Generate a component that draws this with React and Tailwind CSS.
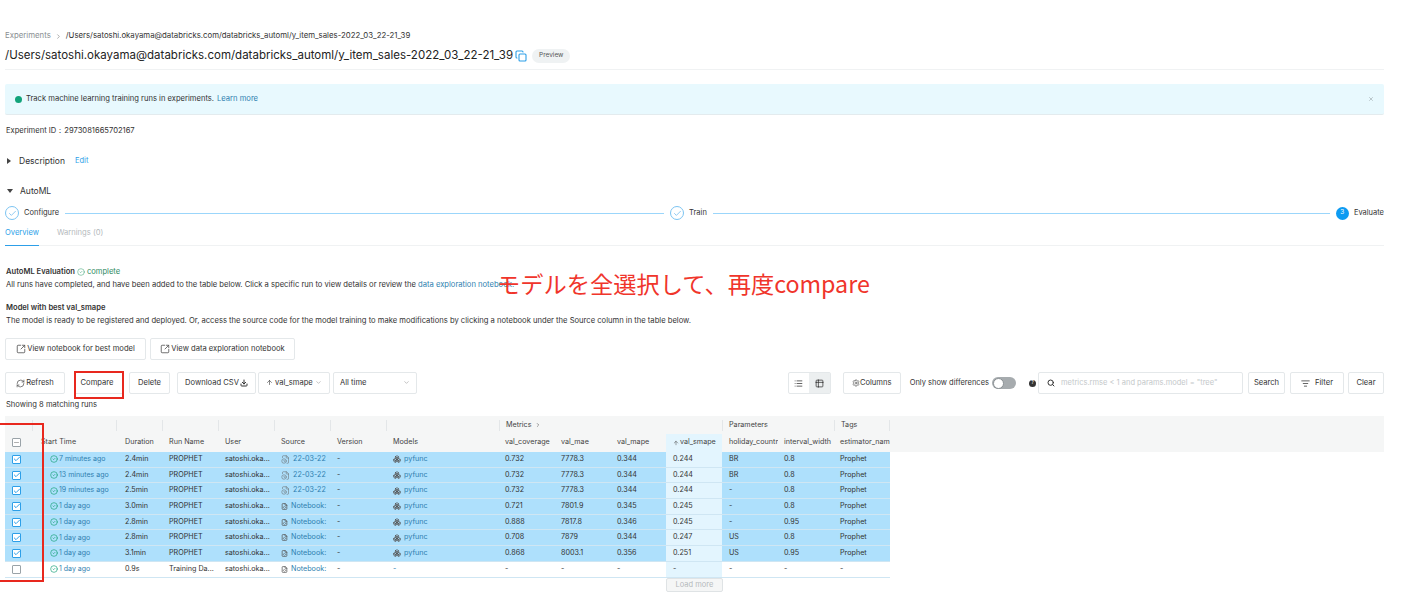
import { ArrowUp, Check, ChevronDown, ChevronRight, Download, FileClock, List, Minus, RefreshCw, Search, Settings, SquareArrowOutUpRight, Table2, ListFilter, X, Copy, Boxes, FileCode, CircleCheck } from "lucide-react";

const COLS = "grid grid-cols-[28px_84px_46px_56px_56px_56px_56px_112px_56px_56px_55px_56px_56px_56px_56px]";

const runs = [
  ["7 minutes ago", "2.4min", "PROPHET", "22-03-22", "pyfunc", "0.732", "7778.3", "0.344", "0.244", "BR", "0.8", "Prophet"],
  ["13 minutes ago", "2.4min", "PROPHET", "22-03-22", "pyfunc", "0.732", "7778.3", "0.344", "0.244", "BR", "0.8", "Prophet"],
  ["19 minutes ago", "2.5min", "PROPHET", "22-03-22", "pyfunc", "0.732", "7778.3", "0.344", "0.244", "-", "0.8", "Prophet"],
  ["1 day ago", "3.0min", "PROPHET", "Notebook:", "pyfunc", "0.721", "7801.9", "0.345", "0.245", "-", "0.8", "Prophet"],
  ["1 day ago", "2.8min", "PROPHET", "Notebook:", "pyfunc", "0.888", "7817.8", "0.346", "0.245", "-", "0.95", "Prophet"],
  ["1 day ago", "2.8min", "PROPHET", "Notebook:", "pyfunc", "0.708", "7879", "0.344", "0.247", "US", "0.8", "Prophet"],
  ["1 day ago", "3.1min", "PROPHET", "Notebook:", "pyfunc", "0.868", "8003.1", "0.356", "0.251", "US", "0.95", "Prophet"],
  ["1 day ago", "0.9s", "Training Da...", "Notebook:", "-", "-", "-", "-", "-", "-", "-", "-"],
];

function Btn({ children, className = "" }) {
  return (
    <div className={`flex h-[22px] items-center justify-center whitespace-nowrap rounded-[2px] border border-[#e4e8ea] bg-white text-[7.6px] text-[#333] ${className}`}>
      {children}
    </div>
  );
}

function StepDone({ label }) {
  return (
    <div className="flex items-center gap-[5px]">
      <div className="flex size-[14px] items-center justify-center rounded-full border border-[#7cc4f2]">
        <Check className="size-[9px] text-[#3aa0e6]" strokeWidth={1.5} />
      </div>
      <span>{label}</span>
    </div>
  );
}

function Row({ run, index }) {
  const selected = index < 7;
  const isDate = run[3] !== "Notebook:";
  const cell = "flex items-center pl-[6px] whitespace-nowrap overflow-hidden";
  return (
    <div className={`${COLS} h-[15.7px] border-b border-[#cfe6f3] text-[7.2px] text-[#333] ${selected ? "bg-[#aee0fc]" : "bg-white"}`}>
      <div className="flex items-center pl-[7px]">
        {selected ? (
          <div className="flex size-[9px] items-center justify-center rounded-[1px] border border-[#2d9fe8] bg-white">
            <Check className="size-[8px] shrink-0 text-[#2d9fe8]" strokeWidth={3} />
          </div>
        ) : (
          <div className="size-[9px] rounded-[1px] border border-[#9aa3a8] bg-white" />
        )}
      </div>
      <div className="flex items-center gap-[1px] pl-[17px] whitespace-nowrap text-[7px] text-[#2f7fb0]">
        <CircleCheck className="size-[8px] shrink-0 text-[#19a17a]" strokeWidth={2} />
        {run[0]}
      </div>
      <div className={`${cell} pl-[8px]`}>{run[1]}</div>
      <div className={cell}>{run[2]}</div>
      <div className={cell}>satoshi.oka...</div>
      <div className={`${cell} gap-[3px] text-[#2f7fb0]`}>
        {isDate ? <FileClock className="size-[9px] shrink-0 text-[#666]" strokeWidth={1.4} /> : <FileCode className="size-[7px] shrink-0 text-[#555]" strokeWidth={2.5} />}
        {run[3]}
      </div>
      <div className={cell}>-</div>
      <div className={`${cell} gap-[3px] text-[#2f7fb0]`}>
        {run[4] !== "-" && <Boxes className="size-[8px] shrink-0 text-[#555]" strokeWidth={2.2} />}
        {run[4]}
      </div>
      <div className={cell}>{run[5]}</div>
      <div className={cell}>{run[6]}</div>
      <div className={cell}>{run[7]}</div>
      <div className="flex items-center overflow-hidden whitespace-nowrap bg-[#e3f5fe] pl-[7px]">{run[8]}</div>
      <div className="flex items-center overflow-hidden whitespace-nowrap pl-[7px]">{run[9]}</div>
      <div className={cell}>{run[10]}</div>
      <div className={cell}>{run[11]}</div>
    </div>
  );
}

export default function App() {
  return (
    <div className="relative h-[593px] w-[1406px] overflow-hidden bg-white font-['Inter',sans-serif] text-[#333]">
      <div className="w-[1384px] pl-[5px]">
        {/* Header */}
        <div className="mt-[29px] flex h-[14px] items-center gap-[4px] text-[7.8px]">
          <span className="text-[#8a8f93]">Experiments</span>
          <ChevronRight className="size-[7px] text-[#777]" />
          <span>/Users/satoshi.okayama@databricks.com/databricks_automl/y_item_sales-2022_03_22-21_39</span>
        </div>
        <div className="mt-[4px] flex h-[18px] items-center text-[11.5px] text-[#222]">
          <span>/Users/satoshi.okayama@databricks.com/databricks_automl/y_item_sales-2022_03_22-21_39</span>
          <Copy className="ml-[2px] size-[12px] text-[#2d9fe8]" strokeWidth={2.2} />
          <span className="ml-[5px] rounded-full bg-[#eff2f3] px-[7px] py-[2px] text-[6.5px] text-[#555]">Preview</span>
        </div>
        <div className="mt-[4px] h-px bg-[#f0f2f3]" />

        {/* Banner */}
        <div className="mt-[14px] flex h-[31px] items-center rounded-[2px] border-b border-[#e3ebee] bg-[#e8f9fe] pl-[10px] pr-[10px] text-[7.6px]">
          <div className="size-[7px] rounded-full bg-[#12a37a]" />
          <span className="ml-[4px]">Track machine learning training runs in experiments.</span>
          <span className="ml-[3px] text-[#2f7fb0]">Learn more</span>
          <X className="ml-auto size-[6px] text-[#8a9499]" />
        </div>
        <div className="mt-[10px] flex h-[12px] items-center pl-[1px] text-[7.6px]">Experiment ID：2973081665702167</div>

        <div className="mt-[17px] flex h-[14px] items-center text-[8.5px]">
          <div className="ml-[2px] size-0 border-y-[3px] border-l-[4px] border-y-transparent border-l-[#444]" />
          <span className="ml-[8px]">Description</span>
          <span className="ml-[10px] text-[7.5px] text-[#2d9fe8]">Edit</span>
        </div>
        <div className="mt-[16px] flex h-[14px] items-center text-[8.5px]">
          <div className="ml-[1.5px] size-0 border-x-[3px] border-t-[4px] border-x-transparent border-t-[#444]" />
          <span className="ml-[7.5px]">AutoML</span>
        </div>

        {/* Steps */}
        <div className="mt-[8px] flex h-[14px] items-center text-[7.5px]">
          <StepDone label="Configure" />
          <div className="mx-[6px] h-px w-[599px] bg-[#9bd6fb]" />
          <StepDone label="Train" />
          <div className="mx-[6px] h-px flex-1 bg-[#9bd6fb]" />
          <div className="flex items-center gap-[5px]">
            <div className="flex size-[13px] items-center justify-center rounded-full bg-[#0d9bf2] text-[6.5px] text-white">3</div>
            <span>Evaluate</span>
          </div>
        </div>
        <div className="mt-[6px] flex h-[20px] gap-[18px] border-b border-[#f0f2f3] text-[7.6px]">
          <span className="-mb-px border-b border-[#2d9fe8] pt-[1px] text-[#2d9fe8]">Overview</span>
          <span className="pt-[1px] text-[#b5babd]">Warnings (0)</span>
        </div>

        {/* Evaluation */}
        <div className="mt-[20px] flex h-[12px] items-center gap-[2px] pl-[1px] text-[7.6px]">
          <span className="font-semibold">AutoML Evaluation</span>
          <CircleCheck className="size-[8px] text-[#2e9e6c]" strokeWidth={1.5} />
          <span className="text-[#2e8a5f]">complete</span>
        </div>
        <div className="mt-[1px] h-[12px] pl-[1px] text-[7.62px] leading-[12px]">
          All runs have completed, and have been added to the table below. Click a specific run to view details or review the{" "}
          <span className="text-[#2f7fb0]">data exploration notebook.</span>
        </div>
        <div className="mt-[11px] h-[12px] pl-[1px] text-[7.6px] font-semibold leading-[12px]">Model with best val_smape</div>
        <div className="mt-[1px] h-[12px] pl-[1px] text-[7.62px] leading-[12px]">
          The model is ready to be registered and deployed. Or, access the source code for the model training to make modifications by clicking a notebook under the Source column in the table below.
        </div>

        <div className="mt-[11px] flex gap-[4px]">
          <Btn className="w-[141px] gap-[1px]"><SquareArrowOutUpRight className="size-[10px] text-[#555]" />View notebook for best model</Btn>
          <Btn className="w-[145px] gap-[1px]"><SquareArrowOutUpRight className="size-[10px] text-[#555]" />View data exploration notebook</Btn>
        </div>

        {/* Toolbar */}
        <div className="mt-[12px] flex items-center">
          <Btn className="w-[60px] gap-[1px]"><RefreshCw className="size-[9px] text-[#555]" />Refresh</Btn>
          <Btn className="ml-[9px] w-[50px] pr-[4px]">Compare</Btn>
          <Btn className="ml-[5px] w-[41px]">Delete</Btn>
          <Btn className="ml-[7px] w-[79px] gap-[1px]">Download CSV<Download className="size-[8px]" strokeWidth={3} /></Btn>
          <Btn className="ml-[2px] w-[72px] px-[7px]">
            <span className="flex w-full items-center justify-between">
              <span className="flex items-center gap-[2px]"><ArrowUp className="size-[7px]" />val_smape</span>
              <ChevronDown className="size-[7px] text-[#999]" />
            </span>
          </Btn>
          <Btn className="ml-[3px] w-[84px] px-[6px]">
            <span className="flex w-full items-center justify-between">
              All time
              <ChevronDown className="size-[7px] text-[#999]" />
            </span>
          </Btn>

          <div className="ml-auto flex h-[22px] w-[43px] rounded-[2px] border border-[#e4e8ea]">
            <div className="flex flex-1 items-center justify-center"><List className="size-[9px]" /></div>
            <div className="flex flex-1 items-center justify-center bg-[#eceff0]"><Table2 className="size-[9px]" /></div>
          </div>
          <Btn className="ml-[12px] w-[58px]"><Settings className="size-[8px] text-[#555]" />Columns</Btn>
          <span className="ml-[9px] whitespace-nowrap text-[7.5px]">Only show differences</span>
          <div className="ml-[3px] flex h-[12px] w-[24px] items-center rounded-full bg-[#a6abae]">
            <div className="ml-[1px] size-[11px] rounded-full border border-[#8a9094] bg-white" />
          </div>
          <div className="ml-[13px] flex size-[7px] items-center justify-center rounded-full bg-[#333] text-[5px] text-white">?</div>
          <div className="ml-[2px] flex h-[22px] w-[205px] items-center gap-[6px] whitespace-nowrap rounded-[2px] border border-[#e4e8ea] pl-[8px] text-[7.5px] text-[#c4c8ca]">
            <Search className="size-[8px] text-[#333]" strokeWidth={3} />
            metrics.rmse &lt; 1 and params.model = "tree"
          </div>
          <Btn className="ml-[5px] w-[37px]">Search</Btn>
          <Btn className="ml-[5px] w-[54px] gap-[5px]"><ListFilter className="size-[9px]" />Filter</Btn>
          <Btn className="ml-[4px] w-[36px]">Clear</Btn>
        </div>
        <div className="mt-[4px] h-[14px] pl-[1px] text-[7.6px] leading-[14px]">Showing 8 matching runs</div>

        {/* Runs table */}
        <div className="mt-[4px] bg-[#f5f6f6]">
          <div className={`${COLS} h-[18px] text-[7.2px] text-[#444]`}>
            {Array.from({ length: 7 }).map((_, i) => (
              <div key={i} className="my-[4px] border-r border-[#e3e6e8]" />
            ))}
            <div />
            <div className="col-span-4 my-[4px] flex items-center gap-[3px] border-l border-[#e3e6e8] pl-[6px]">Metrics<ChevronRight className="size-[6px]" /></div>
            <div className="col-span-2 my-[4px] flex items-center border-l border-[#e3e6e8] pl-[6px]">Parameters</div>
            <div className="my-[4px] flex items-center border-x border-[#e3e6e8] pl-[6px]">Tags</div>
          </div>
          <div className={`${COLS} h-[18px] pb-[1px] text-[7.2px] text-[#444]`}>
            <div className="flex items-center pl-[7px]">
              <div className="flex size-[9px] items-center justify-center rounded-[1px] border border-[#9aa3a8] bg-white">
                <Minus className="size-[7px] text-[#777]" />
              </div>
            </div>
            {["Start Time", "Duration", "Run Name", "User", "Source", "Version", "Models", "val_coverage", "val_mae", "val_mape"].map((h, i) => (
              <div key={h} className={`flex items-center whitespace-nowrap ${i < 2 ? "pl-[8px]" : "pl-[6px]"}`}>{h}</div>
            ))}
            <div className="-mb-[1px] flex items-center gap-[1px] whitespace-nowrap bg-[#e3f5fe] pb-[1px] pl-[7px]"><ArrowUp className="size-[6px]" />val_smape</div>
            {["holiday_countr", "interval_width", "estimator_nam"].map((h, i) => (
              <div key={h} className={`flex items-center overflow-hidden whitespace-nowrap ${i === 0 ? "pl-[7px]" : "pl-[6px]"}`}>{h}</div>
            ))}
          </div>
        </div>
        <div className="w-[885px]">
          {runs.map((run, i) => (
            <Row key={i} run={run} index={i} />
          ))}
        </div>
        <div className="ml-[661px] flex h-[14px] w-[57px] items-center justify-center rounded-[2px] border border-[#dfe3e5] bg-[#f5f6f6] text-[7.5px] text-[#b5babd]">Load more</div>
      </div>

      {/* Red annotations */}
      <div className="absolute left-[497px] top-[269px] whitespace-nowrap font-['Noto_Sans_CJK_JP',sans-serif] text-[23.25px] leading-[28px] text-[#f0352b]">モデルを全選択して、再度compare</div>
      <div className="absolute left-[74px] top-[371px] h-[28px] w-[50px] border-2 border-[#e8281e]" />
      <div className="absolute left-[-4px] top-[423px] h-[159px] w-[48px] border-2 border-[#e8281e]" />
    </div>
  );
}
